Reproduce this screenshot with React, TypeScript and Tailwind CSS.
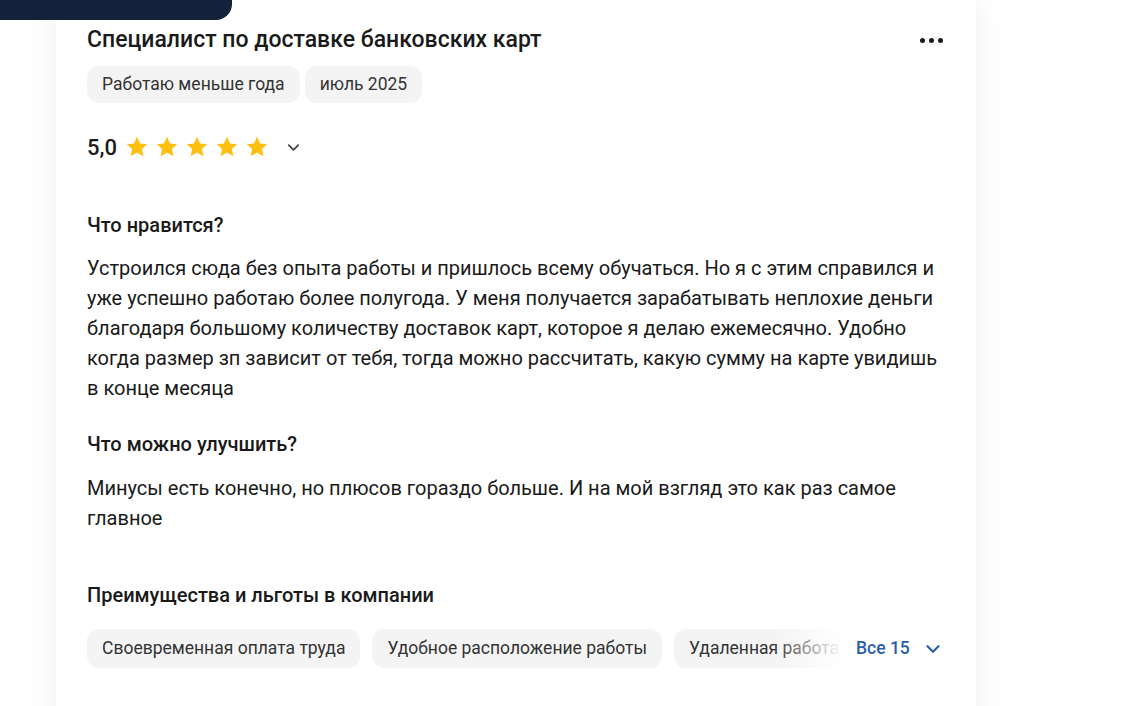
import { ChevronDown } from 'lucide-react'

const tags = ['Работаю меньше года', 'июль 2025']
const perks = ['Своевременная оплата труда', 'Удобное расположение работы', 'Удаленная работа']

function Star() {
  return (
    <svg width="24" height="24" viewBox="0 0 24 24" aria-hidden="true">
      <path
        d="M12 1.8l3.1 6.6 7.1.8-5.3 4.9 1.5 7.1L12 17.6l-6.4 3.6 1.5-7.1-5.3-4.9 7.1-.8z"
        fill="#ffbf0f"
      />
    </svg>
  )
}

export default function App() {
  return (
    <div className="relative h-[706px] overflow-hidden bg-white font-['Roboto',sans-serif] text-[#1a1a1a]">
      {/* dark tab peeking from the header */}
      <div className="absolute left-0 top-0 z-10 h-[20px] w-[232px] rounded-br-[16px] bg-[#14213a]" />

      <div className="ml-[56px] w-[920px] bg-white px-[31px] pt-[26px] pb-[80px] shadow-[0_0_28px_rgba(0,0,0,0.07)]">
        {/* Title */}
        <div className="flex items-center justify-between">
          <h1 className="text-[23px] leading-[28px] font-medium">Специалист по доставке банковских карт</h1>
          <div className="mr-[2px] flex gap-[4px]">
            <span className="h-[5px] w-[5px] rounded-full bg-[#1a1a1a]" />
            <span className="h-[5px] w-[5px] rounded-full bg-[#1a1a1a]" />
            <span className="h-[5px] w-[5px] rounded-full bg-[#1a1a1a]" />
          </div>
        </div>

        <div className="mt-[12px] flex gap-[5px]">
          {tags.map((t) => (
            <span key={t} className="flex h-[37px] items-center rounded-[12px] bg-[#f4f4f4] px-[15px] text-[17.5px] text-[#333]">
              {t}
            </span>
          ))}
        </div>

        {/* Rating */}
        <div className="mt-[28px] flex h-[32px] items-center">
          <span className="mr-[8px] text-[22px] font-medium">5,0</span>
          <div className="flex gap-[6px]">
            <Star />
            <Star />
            <Star />
            <Star />
            <Star />
          </div>
          <ChevronDown className="ml-[15px] h-[19px] w-[19px] text-[#444]" strokeWidth={2.2} />
        </div>

        {/* Likes */}
        <h2 className="mt-[49px] text-[20px] leading-[26px] font-medium">Что нравится?</h2>
        <p className="mt-[15px] mr-[-8px] text-[20px] leading-[30px]">
          Устроился сюда без опыта работы и пришлось всему обучаться. Но я с этим справился и уже успешно работаю более полугода. У меня получается зарабатывать неплохие деньги благодаря большому количеству доставок карт, которое я делаю ежемесячно. Удобно когда размер зп зависит от тебя, тогда можно рассчитать, какую сумму на карте увидишь в конце месяца
        </p>

        <h2 className="mt-[28px] text-[20px] leading-[26px] font-medium">Что можно улучшить?</h2>
        <p className="mt-[16px] mr-[-8px] text-[20px] leading-[30px]">
          Минусы есть конечно, но плюсов гораздо больше. И на мой взгляд это как раз самое главное
        </p>

        {/* Perks */}
        <h2 className="mt-[49px] text-[20px] leading-[26px] font-medium">Преимущества и льготы в компании</h2>
        <div className="mt-[21px] flex items-center">
          <div className="relative flex w-[756px] gap-[12px] overflow-hidden">
            {perks.map((p) => (
              <span key={p} className="flex h-[39px] shrink-0 items-center rounded-[12px] bg-[#f4f4f4] px-[15px] text-[17.5px] text-[#333]">
                {p}
              </span>
            ))}
            <div className="absolute top-0 right-0 h-full w-[70px] bg-gradient-to-r from-white/0 to-white" />
          </div>
          <button className="ml-[13px] flex items-center text-[17.5px] font-medium text-[#2b5ea7]">
            Все 15
            <ChevronDown className="ml-[12px] h-[22px] w-[22px]" strokeWidth={2.4} />
          </button>
        </div>
      </div>
    </div>
  )
}
